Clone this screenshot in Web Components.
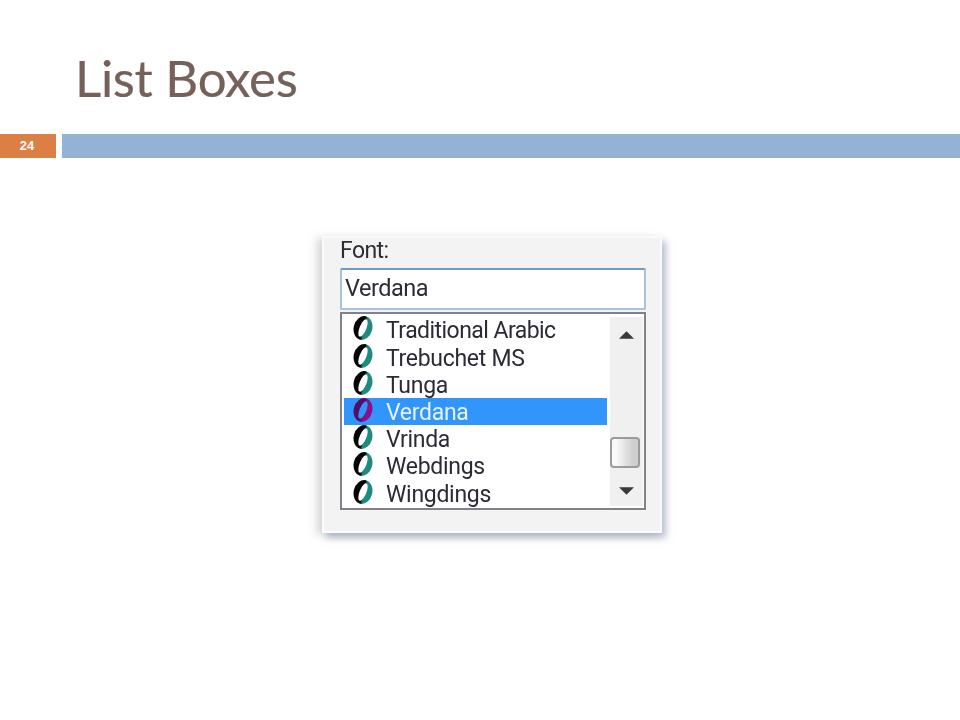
<!DOCTYPE html>
<html><head><meta charset="utf-8"><title>List Boxes</title>
<style>html,body{margin:0;background:#fff}</style></head>
<body>
<slide-page>
  <font-dialog>
    <font-row tight>Traditional Arabic</font-row>
    <font-row>Trebuchet MS</font-row>
    <font-row>Tunga</font-row>
    <font-row selected>Verdana</font-row>
    <font-row>Vrinda</font-row>
    <font-row>Webdings</font-row>
    <font-row>Wingdings</font-row>
  </font-dialog>
</slide-page>
<script>
class SlidePage extends HTMLElement{constructor(){super();this.attachShadow({mode:'open'}).innerHTML=`
<style>
:host{display:block;width:960px;height:720px;overflow:hidden;background:#fff}
h1{margin:0;height:134px;box-sizing:border-box;padding:44px 0 0 75px;font:400 51px/68px Lato,sans-serif;letter-spacing:-.3px;color:#75615a;-webkit-text-stroke:.2px #75615a}
.bars{display:flex;gap:6px;height:24px}
.num{width:56px;background:#dc7f45;color:#fff;font:700 13px/24px "Liberation Sans",sans-serif;text-align:center;box-sizing:border-box;padding-right:2px}
.rule{flex:1;background:#93b3d5}
.stage{padding:78px 0 0 322px}
</style>
<h1>List Boxes</h1>
<div class="bars"><div class="num">24</div><div class="rule"></div></div>
<div class="stage"><slot></slot></div>`}}
class FontDialog extends HTMLElement{constructor(){super();this.attachShadow({mode:'open'}).innerHTML=`
<style>
:host{display:block;width:340px;height:297px;box-sizing:border-box;background:#f3f3f3;border:2px solid #fbfbfb;padding:0 14px 0 16px;
 box-shadow:4px 5px 7px 0 rgba(125,140,165,.55),-6px 2px 8px 0 rgba(165,165,165,.38);
 font-family:Roboto,sans-serif;color:#2c2c34}
.wrap{filter:blur(.55px)}
label{display:block;height:30px;font-size:23px;line-height:25px;letter-spacing:-.6px}
.input{height:42px;box-sizing:border-box;background:#fff;border:2px solid #a5c3da;border-top-color:#6f9cc0;border-radius:2px;padding-left:3px;font-size:23.5px;line-height:37px;letter-spacing:-.5px}
.list{margin-top:2px;height:198px;box-sizing:border-box;background:#fff;border:2px solid #7f8388;display:flex;padding:0 1px 0 1.5px}
.rows{flex:1;min-width:0;padding-top:2.4px;display:flex;flex-direction:column}
.bar{width:33.5px;margin:2.7px 0 2.3px;background:#f0f0f0;display:flex;flex-direction:column;align-items:flex-start;padding-top:14.3px;box-sizing:border-box}
.thumb{width:30.5px;height:31px;margin-top:98px;box-sizing:border-box;border:2px solid #9b9b9b;border-radius:4px;background:linear-gradient(90deg,#fafafa 15%,#cfcfcf 80%)}
svg{display:block;margin-left:9.5px}
.down{margin-top:19px}
</style>
<div class="wrap">
<label>Font:</label>
<div class="input">Verdana</div>
<div class="list"><div class="rows"><slot></slot></div>
<div class="bar">
<svg width="15" height="8" viewBox="0 0 16 8"><path d="M8 0 16 8H0Z" fill="#3a3a3a"/></svg>
<div class="thumb"></div>
<svg class="down" width="15" height="8" viewBox="0 0 16 8"><path d="M0 0H16L8 8Z" fill="#3a3a3a"/></svg>
</div></div></div>`}}
let gid=0;
class FontRow extends HTMLElement{constructor(){super();const sel=this.hasAttribute('selected');const id='g'+(gid++);
const c=sel?['#4f0f66','#8a1088']:['#050505','#1f8a80'];const bg=sel?'#3295fb':'#fff';
this.attachShadow({mode:'open'}).innerHTML=`
<style>
:host{display:flex;align-items:center;height:27.2px;padding-left:9.5px;margin-right:2.5px;font-size:23px;letter-spacing:-.3px;color:#2b2b35;white-space:nowrap}
:host([tight]){letter-spacing:-.55px}
:host([selected]){background:#3295fb;color:#e6f2ff}
svg{flex:none;display:block;align-self:flex-start;margin-right:13px}
span{position:relative;top:1px}
</style>
<svg width="20" height="24" viewBox="0 0 20 24"><defs><linearGradient id="${id}" x1="0" y1="0" x2="1" y2="0"><stop offset=".5" stop-color="${c[0]}"/><stop offset=".6" stop-color="${c[1]}"/></linearGradient></defs>
<ellipse cx="10" cy="12" rx="9.300" ry="12" fill="url(#${id})" transform="rotate(14 10 12)"/><ellipse cx="10" cy="12" rx="3.400" ry="9.200" fill="${bg}" transform="rotate(22 10 12)"/></svg>
<span><slot></slot></span>`}}
customElements.define('slide-page',SlidePage);
customElements.define('font-dialog',FontDialog);
customElements.define('font-row',FontRow);
</script>
</body></html>
